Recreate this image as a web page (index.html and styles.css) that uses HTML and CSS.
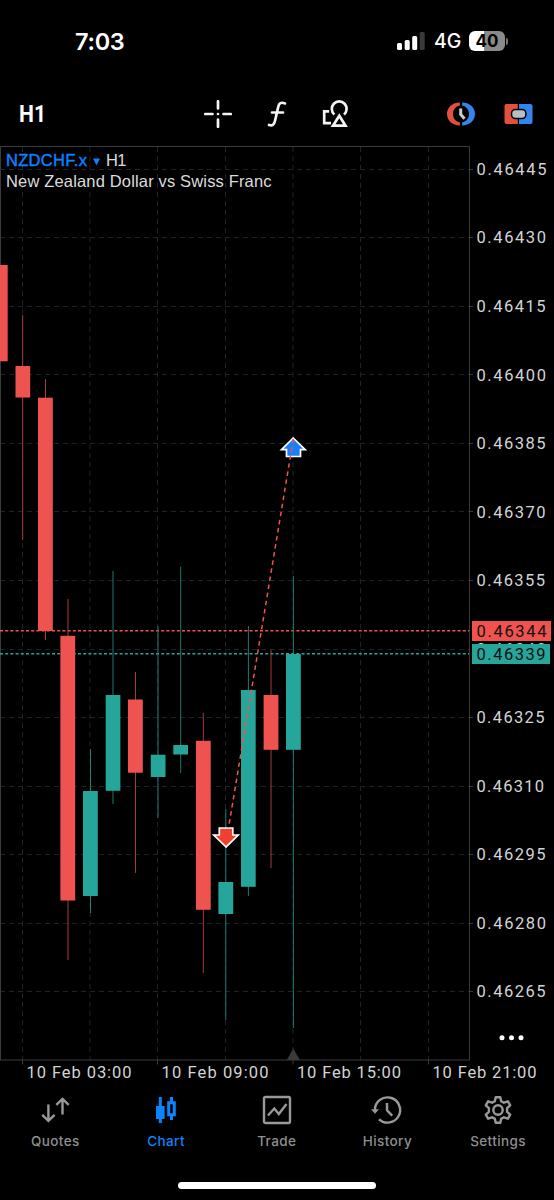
FILE: index.html
```
<!DOCTYPE html>
<html lang="en">
<head>
	<meta charset="UTF-8">
	<title>NZDCHF.x H1</title>
	<link rel="stylesheet" href="styles.css">
</head>
<body>
	<div class="phone">
		<div class="status">
			<span class="time">7:03</span>
			<div class="status-right">
				<svg class="signal" width="28" height="18" viewBox="0 0 28 18">
					<rect x="0" y="11" width="5" height="7" rx="1.5"/>
					<rect x="7.7" y="8" width="5" height="10" rx="1.5"/>
					<rect x="15.2" y="4" width="5" height="14" rx="1.5"/>
					<rect class="off" x="22.7" y="0" width="5" height="18" rx="1.5"/>
				</svg>
				<span class="net">4G</span>
				<div class="battery"><span>40</span></div>
				<i class="cap"></i>
			</div>
		</div>

		<div class="toolbar">
			<span class="period">H1</span>
			<div class="tools">
				<svg width="28" height="28" viewBox="0 0 28 28">
					<path class="line" d="M14 1.2v7.3M14 19.5v7.3M1.2 14h7.3M19.5 14h7.3"/>
					<circle class="dot" cx="14" cy="14" r="1.3"/>
				</svg>
				<svg width="20" height="28" viewBox="0 0 20 28">
					<path class="line" d="M18 3.4C14 1.8 12 3.2 11.2 7L8.1 20.5C7.2 24.7 5.4 26.2 2 25M5 12.5h11"/>
				</svg>
				<svg width="28" height="28" viewBox="0 0 28 28">
					<path class="line miter" d="M8.2 11.3H3.2v11.900H10"/>
					<path class="line miter" d="M13.400 14.500a7.400 7.400 0 1 1 9.600 0"/>
					<path class="line miter" d="M18.300 15.800L24.500 25.700H12z"/>
				</svg>
			</div>
			<div class="tools right">
				<svg width="28" height="24" viewBox="0 0 28 24">
					<path class="sell" d="M12.9.6C5.4.6 0 5.5 0 12s5.4 11.4 12.9 11.4v-3C8.5 19.5 6 16.2 6 12s2.5-7.5 6.9-8.4z"/>
					<path class="buy" d="M15.1.6C22.600.6 28 5.500 28 12s-5.400 11.400-12.900 11.400v-3C19.500 19.500 22 16.200 22 12s-2.500-7.500-6.900-8.400z"/>
					<path class="hand" d="M13.700 6.500v6l3.800 4.300"/>
				</svg>
				<svg width="29" height="22" viewBox="0 0 29 22">
					<path class="sell" d="M2.500 1h11.300v20H2.500A2 2 0 0 1 .5 19V3a2 2 0 0 1 2-2z"/>
					<path class="buy" d="M15 1h11.500a2 2 0 0 1 2 2v16a2 2 0 0 1-2 2H15z"/>
					<rect class="link" x="8.300" y="7.300" width="12.800" height="7.400" rx="3"/>
				</svg>
			</div>
		</div>

		<svg class="chart" width="554" height="940" viewBox="0 146 554 940">
			<!-- grid -->
			<path class="grid" d="M0 169.500H469M0 237.500H469M0 306.500H469M0 374.500H469M0 443.500H469M0 511.500H469M0 580.500H469M0 649.500H469M0 717.500H469M0 786.500H469M0 854.500H469M0 923.500H469M0 991.500H469"/>
			<path class="grid" d="M22.500 147V1060M90 147V1060M157.500 147V1060M225.500 147V1060M293 147V1060M360.500 147V1060M428.500 147V1060"/>
			<path class="frame" d="M.5 1060V146.500H469.500V1060H0"/>
			<path class="frame" d="M469 169.500h4M469 237.500h4M469 306.500h4M469 374.500h4M469 443.500h4M469 511.500h4M469 580.500h4M469 717.500h4M469 786.500h4M469 854.500h4M469 923.500h4M469 991.500h4M22.500 1060v4.500M157.500 1060v4.500M293 1060v4.500M428.500 1060v4.500"/>
			<path class="marker" d="M293.300 1048.500l6.500 11.500h-13z"/>

			<!-- bid / ask -->
			<path class="ask" d="M0 630.700H469"/>
			<path class="bid" d="M0 653.700H469"/>

			<!-- wicks -->
			<path class="wick down" d="M22.700 315V540M45.500 379V640M68 599V960M135.500 672V873M203.300 713V973M271 650V868"/>
			<path class="wick up" d="M90.500 749V913M113 571V804M158 626V818M180.700 567V773M225.800 809V1020M248.400 626V896M293.400 576V1028"/>

			<!-- bodies -->
			<g class="body down">
				<rect x="0" y="265" width="7.700" height="96.300"/>
				<rect x="15.500" y="366" width="14.700" height="31.500"/>
				<rect x="38" y="397.700" width="14.800" height="233.300"/>
				<rect x="60.400" y="635.800" width="14.800" height="264.700"/>
				<rect x="128" y="699.500" width="14.800" height="73.200"/>
				<rect x="195.900" y="740.800" width="14.800" height="169"/>
				<rect x="263.600" y="695" width="14.800" height="54.800"/>
			</g>
			<g class="body up">
				<rect x="83" y="791" width="14.800" height="105"/>
				<rect x="105.700" y="695" width="14.700" height="95.800"/>
				<rect x="150.800" y="754.700" width="14.700" height="22.300"/>
				<rect x="173.300" y="745" width="14.700" height="9.500"/>
				<rect x="218.400" y="882" width="14.800" height="32"/>
				<rect x="241" y="690" width="14.700" height="196.800"/>
				<rect x="286" y="654" width="14.800" height="95.800"/>
			</g>

			<!-- closed deal -->
			<path class="arrow buy" d="M293.300 438L305.200 449.700H300.500V456.500H286.500V449.700H281.500z"/>
			<path class="arrow sell" d="M226 847L213.800 835H219.300V828H232.800V835H238.200z"/>
			<path class="deal" d="M293.300 439L228.500 828"/>

			<text class="symbol" x="6" y="166.300" textLength="81">NZDCHF.x</text>
			<path class="caret" d="M93 158.500h7l-3.500 6.700z"/>
			<text class="title" x="106" y="166.300" textLength="20.500">H1</text>
			<text class="title" x="6" y="187.300" textLength="265.500">New Zealand Dollar vs Swiss Franc</text>

			<g class="scale">
				<text x="476.500" y="174.900" textLength="70">0.46445</text>
				<text x="476.500" y="243.400" textLength="69.500">0.46430</text>
				<text x="476.500" y="312" textLength="69">0.46415</text>
				<text x="476.500" y="380.500" textLength="69.500">0.46400</text>
				<text x="476.500" y="449" textLength="69">0.46385</text>
				<text x="476.500" y="517.500" textLength="69">0.46370</text>
				<text x="476.500" y="586" textLength="68.500">0.46355</text>
				<text x="476.500" y="654.600" textLength="69.500">0.46340</text>
				<text x="476.500" y="723.200" textLength="68">0.46325</text>
				<text x="476.500" y="791.700" textLength="67.500">0.46310</text>
				<text x="476.500" y="860.200" textLength="69">0.46295</text>
				<text x="476.500" y="928.800" textLength="69.500">0.46280</text>
				<text x="476.500" y="997.400" textLength="69">0.46265</text>
				<text x="26.500" y="1078" textLength="105">10 Feb 03:00</text>
				<text x="161.500" y="1078" textLength="107">10 Feb 09:00</text>
				<text x="297" y="1078" textLength="104">10 Feb 15:00</text>
				<text x="432.500" y="1078" textLength="104">10 Feb 21:00</text>
			</g>
			<rect class="tag-ask" x="472" y="621" width="79" height="20"/>
			<rect class="tag-bid" x="472" y="644" width="78" height="20"/>
			<text class="tag" x="476.500" y="636.700" textLength="70">0.46344</text>
			<text class="tag" x="476.500" y="659.700" textLength="69">0.46339</text>
			<g class="more">
				<circle cx="502" cy="1037.800" r="2.500"/>
				<circle cx="511.500" cy="1037.800" r="2.500"/>
				<circle cx="521" cy="1037.800" r="2.500"/>
			</g>
		</svg>

		<div class="tabs">
			<div class="tab">
				<svg width="30" height="30" viewBox="0 0 30 30">
					<path d="M8.400 9.500v15.500M2.200 19.800l6.200 6 6.200-6M22.500 19.500V4M16.300 9.800l6.200-6 6.200 6"/>
				</svg>
				<span>Quotes</span>
			</div>
			<div class="tab current">
				<svg width="30" height="30" viewBox="0 0 30 30">
					<path class="solid" d="M5 11h2.800V2h3v9h2.800v13h-2.800v4h-3V24H5z"/>
					<path class="thick" d="M17.700 7.800h5.600v11.900h-5.600zM20.500 2v6M20.500 20v5"/>
				</svg>
				<span>Chart</span>
			</div>
			<div class="tab">
				<svg width="30" height="30" viewBox="0 0 30 30">
					<rect x="2" y="2" width="26" height="26" rx="1.500"/>
					<path d="M6 20.500l6.300-7 4.500 5.500L24.500 9"/>
				</svg>
				<span>Trade</span>
			</div>
			<div class="tab">
				<svg width="30" height="30" viewBox="0 0 30 30">
					<path d="M2.900 15A12.600 12.600 0 1 1 7 24.300M15 8v7.300l5.200 5.400"/>
					<path class="solid" d="M-1 14.200h8L3 18.700z"/>
				</svg>
				<span>History</span>
			</div>
			<div class="tab">
				<svg width="30" height="30" viewBox="0 0 30 30">
					<path class="gear" d="M12.700 2.200h4.600l.8 3.900 2.800 1.600 4-1.400 2.300 4-3.100 2.900v3.600l3.100 2.900-2.300 4-4-1.400-2.800 1.600-.8 3.900h-4.600l-.8-3.900-2.800-1.600-4 1.400-2.300-4 3.100-2.900v-3.600l-3.100-2.900 2.300-4 4 1.400 2.800-1.600z"/>
					<circle cx="15" cy="15" r="4.700"/>
				</svg>
				<span>Settings</span>
			</div>
		</div>
		<div class="home"></div>
	</div>
</body>
</html>
```
FILE: styles.css
```
body, div, span {
	margin: 0;
	padding: 0;
}
body {
	background: #000;
	color: #fff;
	font-family: Inter, "Liberation Sans", sans-serif;
}
svg {
	display: block;
	flex: none;
}
.phone {
	display: flex;
	flex-direction: column;
	width: 554px;
	height: 1200px;
	overflow: hidden;
	background: #000;
}

/* status bar */
.status {
	display: flex;
	justify-content: space-between;
	align-items: center;
	height: 82px;
	padding: 0 46px 0 75px;
}
.time {
	font-size: 23.5px;
	font-weight: 600;
	letter-spacing: -0.3px;
}
.status-right {
	display: flex;
	align-items: center;
}
.signal {
	fill: #fff;
}
.signal .off {
	fill: #3a3a3a;
}
.net {
	margin-left: 9px;
	width: 35px;
	font-size: 19.5px;
	font-weight: 500;
}
.battery {
	width: 36px;
	height: 20px;
	border-radius: 6px;
	background: linear-gradient(90deg, #fff 15px, #8a8a8a 15px);
	color: #000;
	font-size: 17px;
	font-weight: 700;
	line-height: 20px;
	text-align: center;
}
.cap {
	margin-left: 1px;
	width: 2px;
	height: 7px;
	border-radius: 0 2px 2px 0;
	background: #777;
}

/* toolbar */
.toolbar {
	display: flex;
	align-items: center;
	height: 64px;
	padding: 0 21px 0 19px;
}
.period {
	width: 185px;
	font: 700 24px/28px Roboto, sans-serif;
	transform: scaleX(0.88);
	transform-origin: left;
}
.tools {
	display: flex;
	align-items: center;
}
.tools svg + svg {
	margin-left: 35px;
}
.tools svg:nth-child(3) {
	margin-left: 34px;
}
.tools.right {
	margin-left: auto;
}
.tools.right svg + svg {
	margin-left: 29px;
}
.line {
	fill: none;
	stroke: #f4f4f4;
	stroke-width: 2.7;
	stroke-linecap: round;
}
.line.miter {
	stroke-linecap: butt;
}
.dot {
	fill: #f4f4f4;
}
.sell {
	fill: #e3503f;
}
.buy {
	fill: #3485ec;
}
.hand {
	fill: none;
	stroke: #c9cfd2;
	stroke-width: 3;
}
.link {
	fill: #b7bfc5;
	stroke: #000;
	stroke-width: 3;
	paint-order: stroke;
}

/* chart */
.grid {
	fill: none;
	stroke: #1f2227;
	stroke-width: 1;
	stroke-dasharray: 5 4;
}
.frame {
	fill: none;
	stroke: #3c3c3e;
}
.marker {
	fill: #3a3a3c;
}
.ask, .bid {
	stroke-width: 1.5;
	stroke-dasharray: 3 2.2;
}
.ask {
	stroke: #ef5350;
}
.bid {
	stroke: #26a69a;
}
.wick {
	fill: none;
	stroke-width: 1;
}
.wick.down {
	stroke: #a33c3a;
}
.wick.up {
	stroke: #1c7b72;
}
.body.down {
	fill: #ef5350;
}
.body.up {
	fill: #26a69a;
}
.arrow {
	stroke: #fff;
	stroke-width: 1.7;
}
.arrow.buy {
	fill: #1a80f5;
}
.arrow.sell {
	fill: #f0402f;
}
.deal {
	stroke: #ef5350;
	stroke-width: 1.5;
	stroke-dasharray: 4.5 3.7;
}
.symbol, .title {
	font: 16.5px "Liberation Sans", Arial, sans-serif;
	fill: #dcdcdc;
}
.symbol {
	fill: #0a84ff;
	stroke: #0a84ff;
	stroke-width: 0.4;
}
.caret {
	fill: #0a84ff;
}
.scale, .tag {
	font: 16.5px Roboto, sans-serif;
	fill: #d4d4d4;
}
.tag {
	fill: #111;
}
.tag-ask {
	fill: #ef5350;
}
.tag-bid {
	fill: #26a69a;
}
.more {
	fill: #fff;
}

/* bottom tabs */
.tabs {
	display: grid;
	grid-template-columns: repeat(5, 110.7px);
	height: 96px;
}
.tab {
	display: flex;
	flex-direction: column;
	align-items: center;
	padding-top: 9px;
	color: #8f8f8f;
	font-size: 13.5px;
	font-weight: 500;
	line-height: 18px;
	letter-spacing: 0.4px;
}
.tab svg {
	overflow: visible;
	fill: none;
	stroke: #999;
	stroke-width: 2.4;
}
.tab span {
	margin-top: 7px;
}
.tab .solid {
	fill: #999;
	stroke: none;
}
.tab .gear {
	stroke-linejoin: round;
}
.tab.current {
	color: #0a84ff;
}
.tab.current svg {
	stroke: #0a84ff;
}
.tab.current .solid {
	fill: #0a84ff;
}
.tab .thick {
	stroke-width: 3;
}
.home {
	align-self: center;
	width: 198px;
	height: 7px;
	border-radius: 4px;
	background: #fff;
}
```
